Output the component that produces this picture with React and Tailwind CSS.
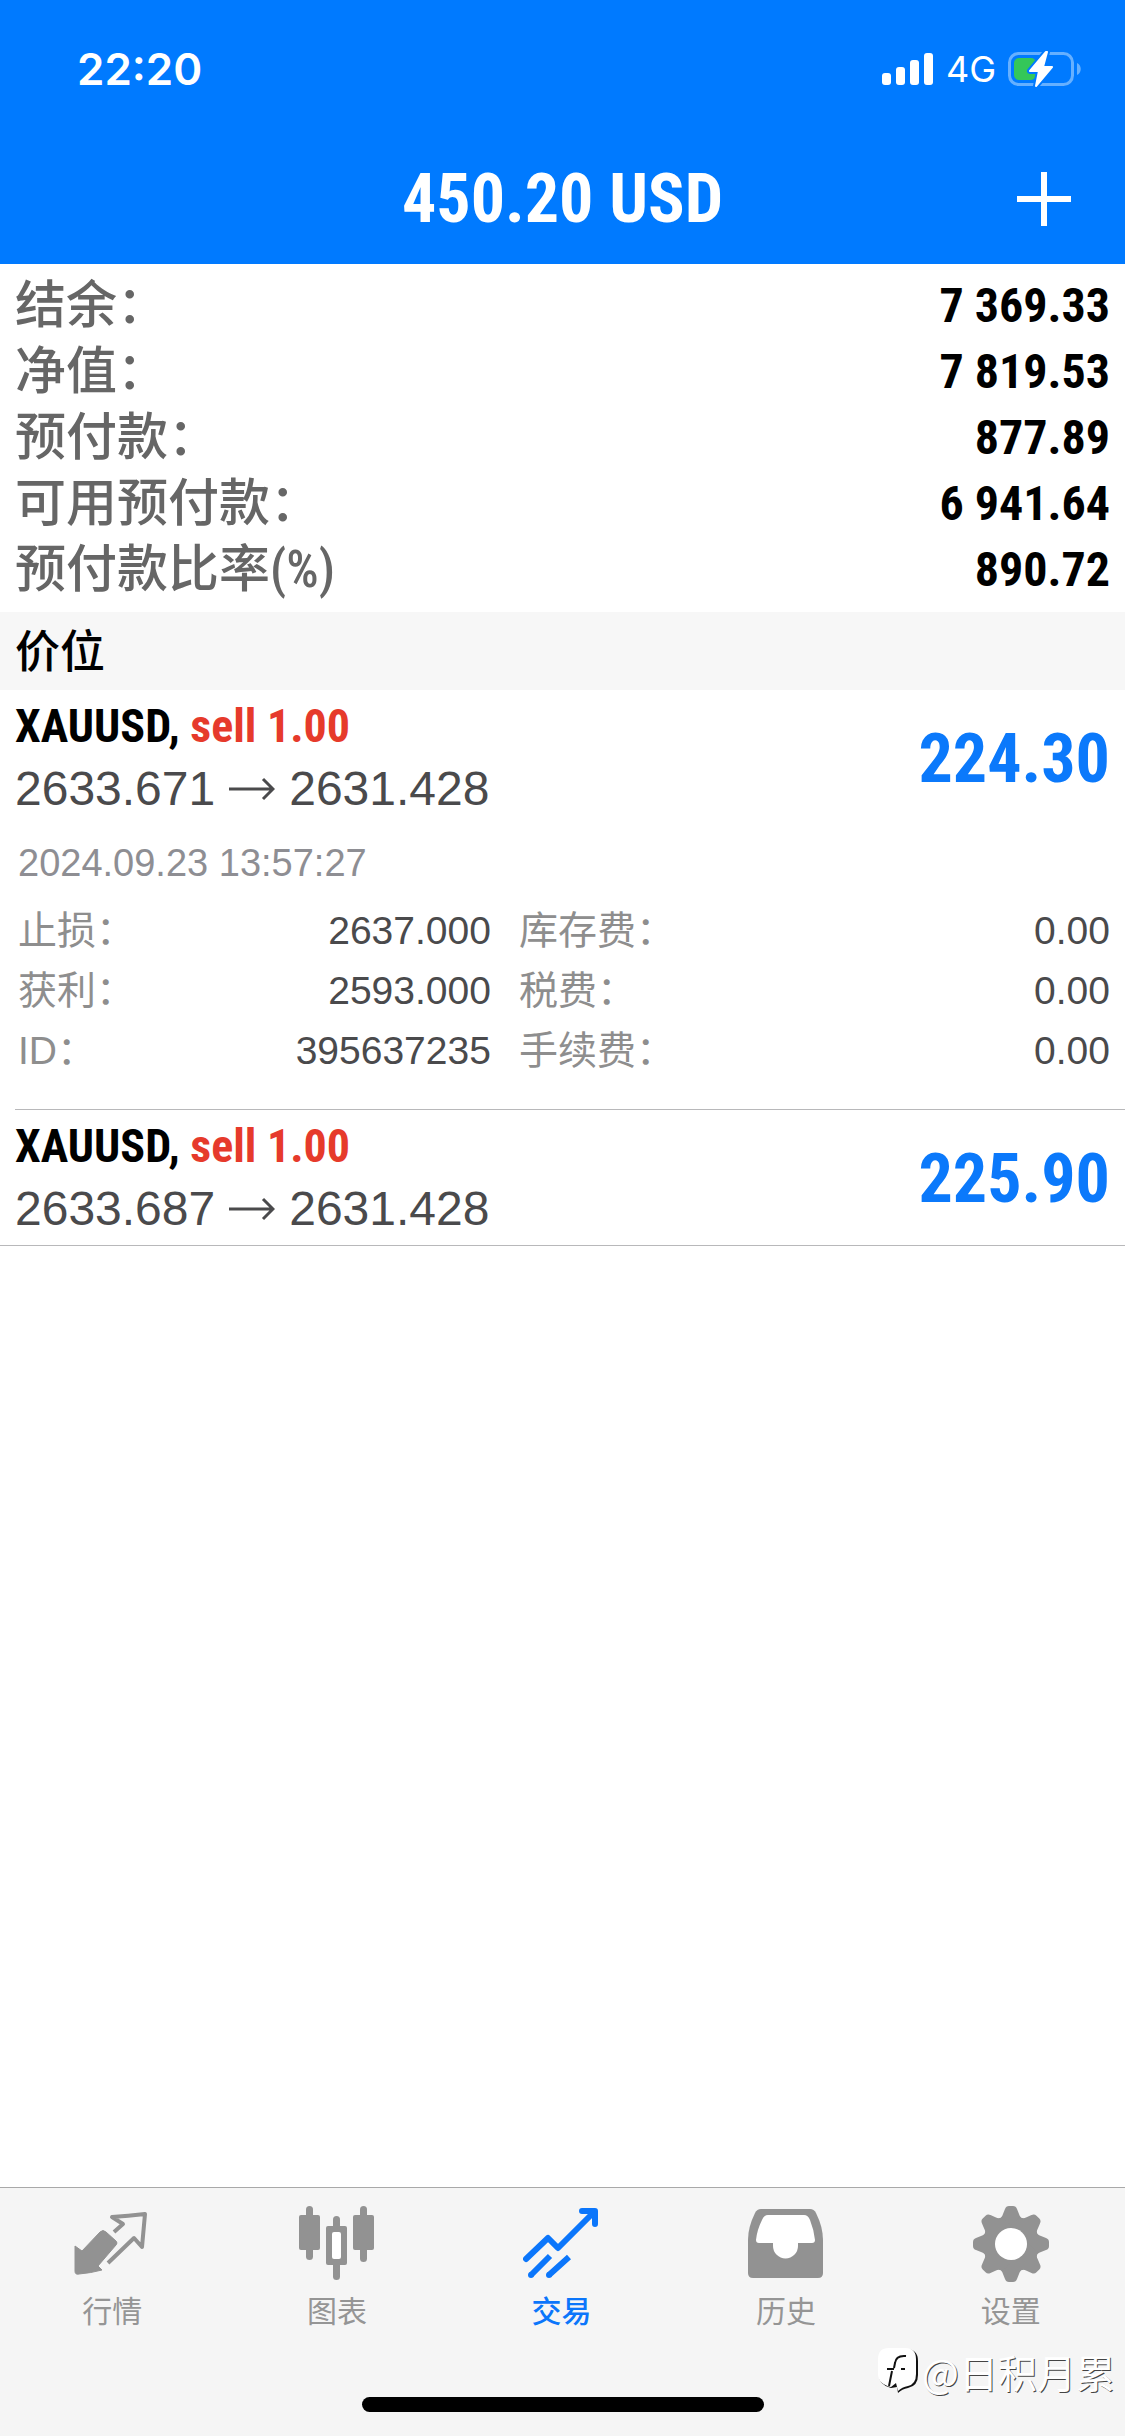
import React from "react";

const account = [
  { label: "结余：", value: "7 369.33" },
  { label: "净值：", value: "7 819.53" },
  { label: "预付款：", value: "877.89" },
  { label: "可用预付款：", value: "6 941.64" },
  { label: "预付款比率(%)", value: "890.72" },
];

const details = [
  { label: "止损：", value: "2637.000" },
  { label: "库存费：", value: "0.00" },
  { label: "获利：", value: "2593.000" },
  { label: "税费：", value: "0.00" },
  { label: "ID：", value: "395637235" },
  { label: "手续费：", value: "0.00" },
];

function SignalIcon() {
  return (
    <svg width="52" height="34" viewBox="0 0 52 34" fill="#fff" aria-hidden="true">
      <rect x="0" y="21" width="9" height="12" rx="3" />
      <rect x="14" y="15" width="9" height="18" rx="3" />
      <rect x="28" y="8" width="9" height="25" rx="3" />
      <rect x="42" y="1" width="9" height="32" rx="3" />
    </svg>
  );
}

function BatteryIcon() {
  const bolt = "M38 1 22 20h9l-3 15 16-19h-9L39 1z";
  return (
    <svg width="74" height="36" viewBox="0 0 74 36" aria-hidden="true">
      <rect x="1.5" y="2.5" width="63" height="31" rx="9" fill="none" stroke="#66b0ff" strokeWidth="3" />
      <path d="M69 12c5 2 5 10 0 12z" fill="#66b0ff" />
      <rect x="6" y="7" width="22" height="22" rx="5" fill="#34c759" />
      <path d={bolt} fill="#fff" stroke="#007aff" strokeWidth="6" strokeLinejoin="round" />
      <path d={bolt} fill="#fff" stroke="#fff" strokeWidth="2" strokeLinejoin="round" />
    </svg>
  );
}

function TabIcon({ children }) {
  return (
    <svg width="76" height="76" viewBox="0 0 76 76" aria-hidden="true">
      {children}
    </svg>
  );
}

function QuotesIcon() {
  return (
    <TabIcon>
      <path
        d="M1 40l7 5 18-19q3-3 6 0l10 9q2 2 0 4L24 60l4 4q-11 3-23 4-4 1-4-3z"
        fill="#929292"
        stroke="#929292"
        strokeLinejoin="round"
      />
      <path
        d="M40 26l9-8-11-7q16-1 33-3l-3 33-8-9-26 25"
        fill="none"
        stroke="#929292"
        strokeWidth="4"
        strokeLinejoin="round"
      />
    </TabIcon>
  );
}

function ChartIcon() {
  return (
    <TabIcon>
      <g fill="#929292">
        <rect x="7" y="0" width="7" height="54" rx="3.5" />
        <rect x="0" y="9" width="21" height="35" rx="2" />
        <rect x="34" y="10" width="7" height="64" rx="3.5" />
        <rect x="27" y="20" width="21" height="39" rx="2" />
        <rect x="61" y="0" width="7" height="56" rx="3.5" />
        <rect x="54" y="9" width="21" height="35" rx="2" />
      </g>
      <rect x="33" y="26" width="9" height="27" rx="2" fill="#fff" />
    </TabIcon>
  );
}

function TradeIcon() {
  return (
    <TabIcon>
      <g fill="none" stroke="#0b76fb" strokeWidth="6" strokeLinejoin="round">
        <path d="M3 53 25 32l10 10L71 6" strokeLinecap="round" />
        <path d="M59 5h13v13" strokeLinecap="round" />
        <path d="M8 69 27 50M26 69 46 51" />
      </g>
      <circle cx="8" cy="69" r="3" fill="#0b76fb" />
      <circle cx="26" cy="69" r="3" fill="#0b76fb" />
    </TabIcon>
  );
}

function HistoryIcon() {
  return (
    <TabIcon>
      <path
        d="M13 3h49q4 0 6 4 7 14 7 27v33q0 5-5 5H5q-5 0-5-5V34Q0 21 7 7q2-4 6-4z"
        fill="#929292"
      />
      <path
        d="M20 9h36q4 0 6 5 4 10 5 20 0 3-3 3H50v3a12 12 0 0 1-25 0v-3H11q-3 0-3-3 1-10 6-20 2-5 6-5z"
        fill="#fff"
      />
    </TabIcon>
  );
}

function SettingsIcon() {
  const tooth = "M25 13q4-1 5-5l2-5q1-3 4-3h4q3 0 4 3l2 5q1 4 5 5v16H25z";
  return (
    <TabIcon>
      <g fill="#929292">
        <circle cx="38" cy="38" r="28" />
        {[0, 45, 90, 135, 180, 225, 270, 315].map((a) => (
          <path key={a} d={tooth} transform={`rotate(${a} 38 38)`} />
        ))}
      </g>
      <circle cx="38" cy="38" r="16" fill="#fff" />
    </TabIcon>
  );
}

const tabs = [
  { name: "行情", Icon: QuotesIcon },
  { name: "图表", Icon: ChartIcon },
  { name: "交易", Icon: TradeIcon, active: true },
  { name: "历史", Icon: HistoryIcon },
  { name: "设置", Icon: SettingsIcon },
];

function PositionHeader({ open, current, profit }) {
  return (
    <div className="flex items-center justify-between pt-[6px] pb-[3px] pr-[15px]">
      <div>
        <p className="font-['Roboto_Condensed',sans-serif] text-[46px] leading-[60px] font-bold text-black">
          XAUUSD, <span className="text-[#e63a2b]">sell 1.00</span>
        </p>
        <p className="flex items-center text-[48px] leading-[66px] text-[#4a4a4c]">
          {open}
          <svg width="46" height="24" viewBox="0 0 46 24" className="mx-3.5" role="img" aria-label="to">
            <path d="M0 12h44M34 2l10 10-10 10" fill="none" stroke="currentColor" strokeWidth="3" />
          </svg>
          {current}
        </p>
      </div>
      <p className="font-['Roboto_Condensed',sans-serif] text-[68px] leading-[76px] font-bold text-[#0b79fb]">
        {profit}
      </p>
    </div>
  );
}

export default function App() {
  return (
    <div
      lang="zh-CN"
      className="flex min-h-screen flex-col bg-white font-['Liberation_Sans','Noto_Sans_CJK_SC',sans-serif]"
    >
      <header className="bg-[#007aff] text-white">
        <div className="flex h-[134px] items-center justify-between pt-1 pr-[43px] pl-[77px] font-['Inter',sans-serif]">
          <span className="text-[44px] leading-none font-semibold">22:20</span>
          <div className="flex items-center">
            <SignalIcon />
            <span className="mr-3 ml-3 text-[36px] leading-none">4G</span>
            <BatteryIcon />
          </div>
        </div>
        <div className="grid h-[130px] grid-cols-[1fr_auto_1fr] items-center">
          <h1 className="col-start-2 font-['Roboto_Condensed',sans-serif] text-[68px] leading-[76px] font-bold">
            450.20 USD
          </h1>
          <button type="button" aria-label="新订单" className="mr-[54px] justify-self-end">
            <svg width="54" height="54" viewBox="0 0 54 54" className="block">
              <path d="M27 0v54M0 27h54" stroke="#fff" strokeWidth="6" />
            </svg>
          </button>
        </div>
      </header>

      <main className="flex-1">
        <dl className="px-[15px] pt-[9px] pb-[9px] font-['Roboto_Condensed','Noto_Sans_CJK_SC',sans-serif]">
          {account.map((row) => (
            <div key={row.label} className="flex h-[66px] items-center justify-between leading-[66px]">
              <dt className="text-[51px] font-medium text-[#666]">{row.label}</dt>
              <dd className="text-[48px] font-bold text-black">{row.value}</dd>
            </div>
          ))}
        </dl>

        <h2 className="bg-[#f7f7f7] px-[15px] pt-1 font-['Roboto_Condensed','Noto_Sans_CJK_SC',sans-serif] text-[45px] leading-[74px] font-medium text-black">
          价位
        </h2>

        <ul className="border-b border-[#b8b8ba]">
          <li className="pl-[15px]">
            <PositionHeader open="2633.671" current="2631.428" profit="224.30" />
            <div className="border-b border-[#b8b8ba] pt-2 pr-[15px] pb-7 pl-[3px]">
              <p className="mb-2 text-[38px] leading-[60px] text-[#8e8e93]">2024.09.23 13:57:27</p>
              <dl className="grid grid-cols-[4fr_5fr] gap-x-7">
                {details.map((d) => (
                  <div key={d.label} className="flex h-[60px] items-center justify-between text-[39px] leading-[60px]">
                    <dt className="text-[#8e8e8e]">{d.label}</dt>
                    <dd className="text-[#4a4a4c]">{d.value}</dd>
                  </div>
                ))}
              </dl>
            </div>
          </li>
          <li className="pl-[15px]">
            <PositionHeader open="2633.687" current="2631.428" profit="225.90" />
          </li>
        </ul>
      </main>

      <footer className="relative border-t border-[#a9a9a9] bg-[#f5f5f5] pb-6">
        <nav className="grid grid-cols-5 pt-[18px] pr-[2px]">
          {tabs.map(({ name, Icon, active }) => (
            <button
              key={name}
              type="button"
              className={`flex flex-col items-center gap-2 text-[30px] leading-[44px] ${
                active ? "font-medium text-[#0b76fb]" : "text-[#959595]"
              }`}
            >
              <Icon />
              {name}
            </button>
          ))}
        </nav>
        <div className="mx-auto mt-[63px] h-[15px] w-[402px] rounded-full bg-black" />
        <div className="absolute right-[10px] bottom-[40px] flex items-center font-['Noto_Sans_CJK_SC',sans-serif] text-[39px] leading-[50px] text-white [text-shadow:1px_1px_0_#444]">
          <svg width="40" height="46" viewBox="0 0 40 46" className="mr-1" aria-hidden="true">
            <path d="M12 1h16q12 0 12 12v14q0 11-10 13-6 1-10 5l-1-6-6 1Q1 37 1 27z" fill="#111" />
            <path d="M11 0h16q11 0 11 11v15q0 10-8 12-6 1-10 5l-2-8-5 4Q0 36 0 26V11Q0 0 11 0z" fill="#fff" />
            <path d="M28 8q-10-1-11 7l-1 5M9 21h7M23 21h4M14 23l-3 15" fill="none" stroke="#111" strokeWidth="2" />
          </svg>
          @日积月累
        </div>
      </footer>
    </div>
  );
}
